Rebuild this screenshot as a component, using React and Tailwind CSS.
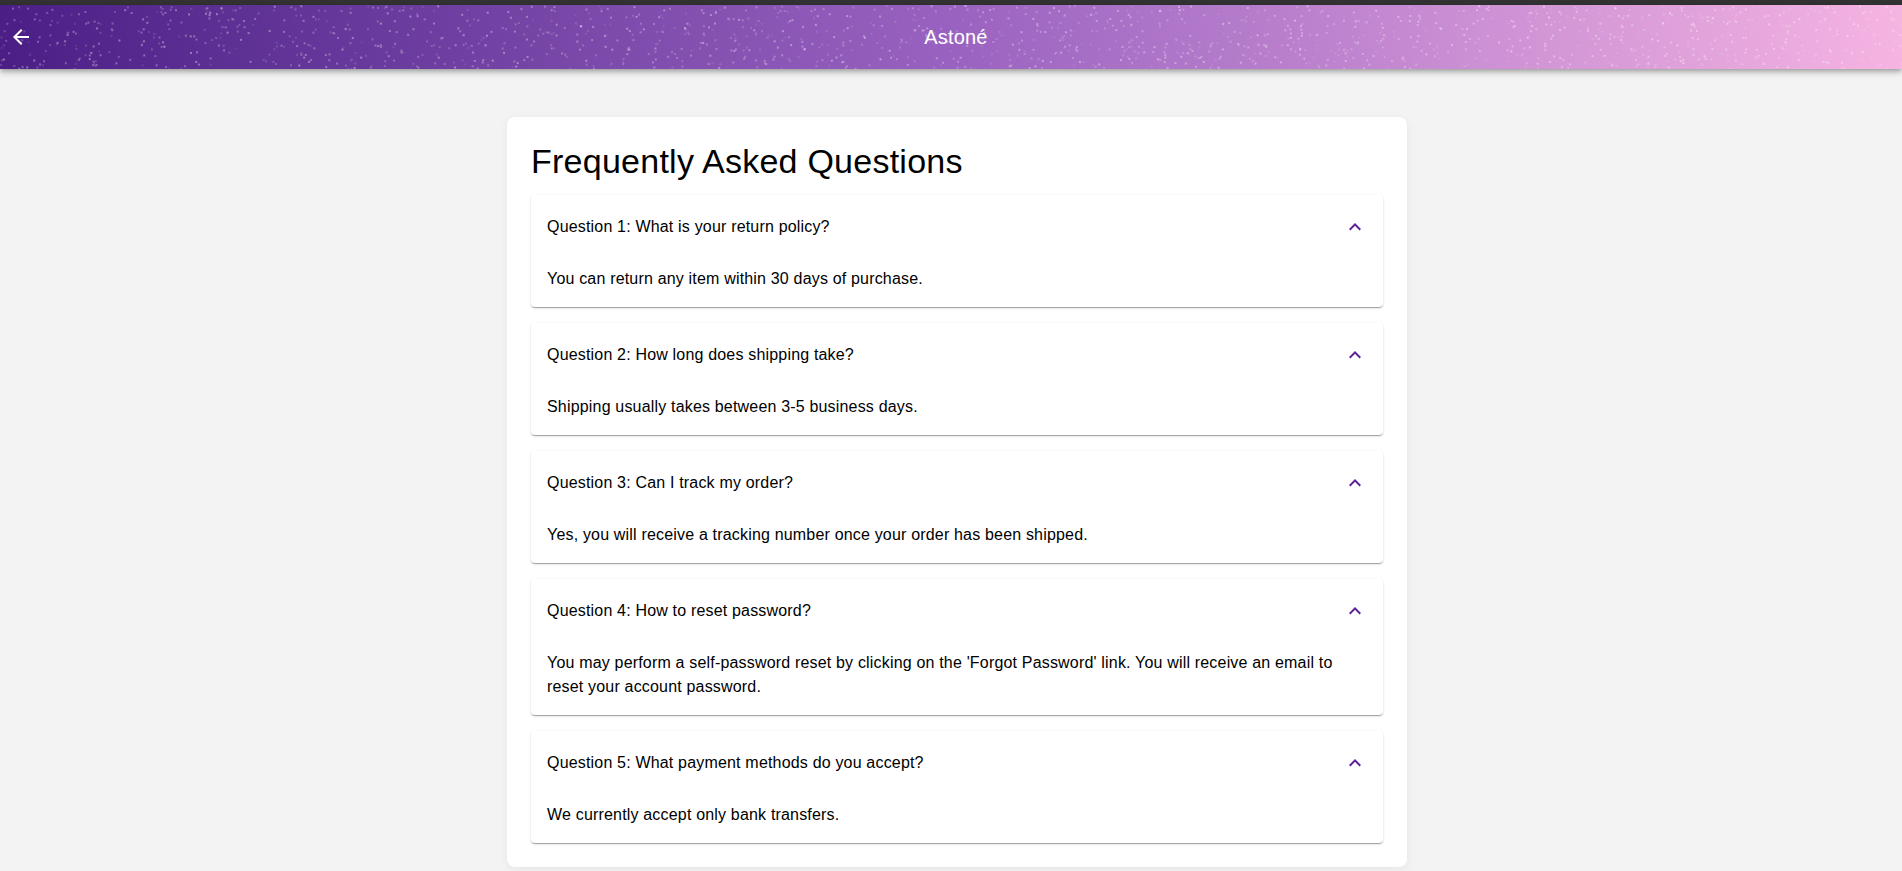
import { useMemo } from "react";

const faqs = [
  {
    q: "Question 1: What is your return policy?",
    a: "You can return any item within 30 days of purchase.",
  },
  {
    q: "Question 2: How long does shipping take?",
    a: "Shipping usually takes between 3-5 business days.",
  },
  {
    q: "Question 3: Can I track my order?",
    a: "Yes, you will receive a tracking number once your order has been shipped.",
  },
  {
    q: "Question 4: How to reset password?",
    a: "You may perform a self-password reset by clicking on the 'Forgot Password' link. You will receive an email to reset your account password.",
  },
  {
    q: "Question 5: What payment methods do you accept?",
    a: "We currently accept only bank transfers.",
  },
];

/* speckle texture on the app bar */
function Sparkles() {
  const dots = useMemo(() => {
    let s = 7;
    const rnd = () => {
      s = (s * 16807) % 2147483647;
      return s / 2147483647;
    };
    return Array.from({ length: 1500 }, () => ({
      x: rnd() * 1902,
      y: rnd() * 64,
      o: 0.08 + rnd() * 0.3,
    }));
  }, []);
  return (
    <svg className="absolute inset-0 w-full h-full" viewBox="0 0 1902 64" preserveAspectRatio="none">
      {dots.map((d, i) => (
        <rect key={i} x={d.x} y={d.y} width="2" height="2" fill="#fff" opacity={d.o} />
      ))}
    </svg>
  );
}

function FaqItem({ q, a }) {
  return (
    <div className="bg-white rounded shadow-[0_2px_1px_-1px_rgba(0,0,0,0.2),0_1px_1px_0_rgba(0,0,0,0.14),0_1px_3px_0_rgba(0,0,0,0.12)]">
      <div className="h-16 px-4 flex items-center justify-between">
        <span>{q}</span>
        <svg viewBox="0 0 24 24" className="w-6 h-6 rotate-180 fill-[#5b1f9a]">
          <path d="M16.59 8.59 12 13.17 7.41 8.59 6 10l6 6 6-6z" />
        </svg>
      </div>
      <div className="pl-4 pr-[40px] pt-2 pb-4">
        <p>{a}</p>
      </div>
    </div>
  );
}

export default function App() {
  return (
    <div className="min-h-screen bg-[#f3f3f3] font-['Liberation_Sans',Arial,sans-serif] text-base leading-6 tracking-[0.18px] text-black">
      <div className="h-[5px] bg-[#333333]" />
      {/* APP BAR */}
      <header className="relative h-16 bg-linear-to-r from-[#4b1e86] via-[#9a62c0] to-[#f6b4e2] shadow-[0_2px_4px_-1px_rgba(0,0,0,0.2),0_4px_5px_0_rgba(0,0,0,0.14),0_1px_10px_0_rgba(0,0,0,0.12)] overflow-hidden">
        <Sparkles />
        <div className="relative h-full flex items-center px-[9px]">
          <svg viewBox="0 0 24 24" className="w-6 h-6 fill-white">
            <path d="M20 11H7.83l5.59-5.59L12 4l-8 8 8 8 1.41-1.41L7.83 13H20z" />
          </svg>
          <h1 className="flex-1 text-center text-xl font-medium text-white pr-[33px] pl-[19px]">
            Astoné
          </h1>
        </div>
      </header>

      {/* CONTENT */}
      <main className="pt-12 pl-3">
        <div className="w-[900px] mx-auto bg-white rounded-lg p-6 shadow-[0_2px_10px_rgba(0,0,0,0.06)]">
          <h2 className="text-[34px] leading-[1.235] tracking-[0.25px] mb-3">Frequently Asked Questions</h2>
          <div className="flex flex-col gap-4">
            {faqs.map((f) => (
              <FaqItem key={f.q} q={f.q} a={f.a} />
            ))}
          </div>
        </div>
      </main>
    </div>
  );
}
